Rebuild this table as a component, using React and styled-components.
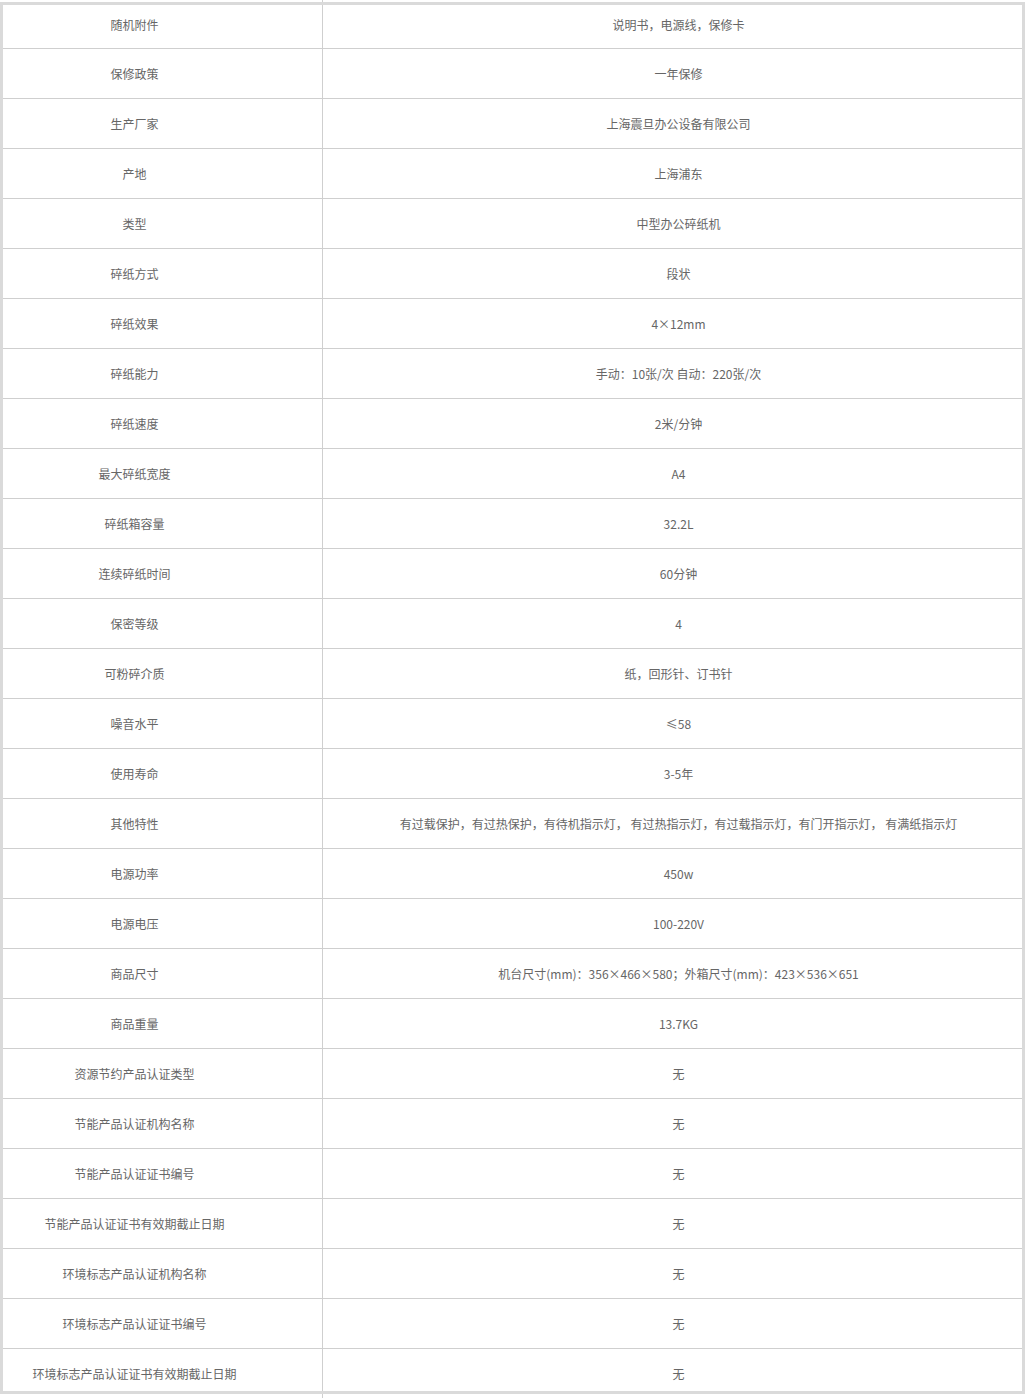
import React from "react";
import styled, { createGlobalStyle } from "styled-components";

const GlobalStyle = createGlobalStyle`
  html, body {
    margin: 0;
    padding: 0;
    background: #fff;
  }
  body {
    font-family: "Microsoft YaHei", "Noto Sans CJK SC", "Liberation Sans", sans-serif;
    font-size: 12px;
    color: #666;
  }
`;

const specs = [
  ["随机附件", "说明书，电源线，保修卡"],
  ["保修政策", "一年保修"],
  ["生产厂家", "上海震旦办公设备有限公司"],
  ["产地", "上海浦东"],
  ["类型", "中型办公碎纸机"],
  ["碎纸方式", "段状"],
  ["碎纸效果", "4×12mm"],
  ["碎纸能力", "手动：10张/次 自动：220张/次"],
  ["碎纸速度", "2米/分钟"],
  ["最大碎纸宽度", "A4"],
  ["碎纸箱容量", "32.2L"],
  ["连续碎纸时间", "60分钟"],
  ["保密等级", "4"],
  ["可粉碎介质", "纸，回形针、订书针"],
  ["噪音水平", "≤58"],
  ["使用寿命", "3-5年"],
  [
    "其他特性",
    "有过载保护，有过热保护，有待机指示灯， 有过热指示灯，有过载指示灯，有门开指示灯， 有满纸指示灯",
  ],
  ["电源功率", "450w"],
  ["电源电压", "100-220V"],
  ["商品尺寸", "机台尺寸(mm)：356×466×580；外箱尺寸(mm)：423×536×651"],
  ["商品重量", "13.7KG"],
  ["资源节约产品认证类型", "无"],
  ["节能产品认证机构名称", "无"],
  ["节能产品认证证书编号", "无"],
  ["节能产品认证证书有效期截止日期", "无"],
  ["环境标志产品认证机构名称", "无"],
  ["环境标志产品认证证书编号", "无"],
  ["环境标志产品认证证书有效期截止日期", "无"],
];

const Page = styled.div`
  width: 1025px;
`;

const Stub = styled.div`
  height: ${(p) => p.$h}px;
  width: 1px;
  margin-left: 322px;
  background: #cfcfcf;
`;

const Frame = styled.div`
  border: 3px solid #dadada;
  background: #fff;
`;

const Row = styled.div`
  display: grid;
  grid-template-columns: 320px 1fr;
  height: ${(p) => (p.$pos === "first" ? 43 : p.$pos === "last" ? 42 : 49)}px;
  border-bottom: ${(p) => (p.$pos === "last" ? "none" : "1px solid #cfcfcf")};
`;

const Cell = styled.div`
  display: flex;
  align-items: center;
  justify-content: center;
  text-align: center;
  line-height: 18px;
  white-space: nowrap;
  padding-top: ${(p) => (p.$pos === "last" ? 8 : p.$pos === "first" ? 0 : 1)}px;
  padding-bottom: ${(p) => (p.$pos === "first" ? 4 : 0)}px;
`;

const Label = styled(Cell)`
  border-right: 1px solid #cfcfcf;
  padding-right: 56px;
`;

const Value = styled(Cell)`
  padding-left: 12px;
`;

export default function App() {
  return (
    <Page>
      <GlobalStyle />
      <Stub $h={2} />
      <Frame>
        {specs.map(([k, v], i) => {
          const pos = i === 0 ? "first" : i === specs.length - 1 ? "last" : "mid";
          return (
            <Row key={k} $pos={pos}>
              <Label $pos={pos}>{k}</Label>
              <Value $pos={pos}>{v}</Value>
            </Row>
          );
        })}
      </Frame>
      <Stub $h={4} />
    </Page>
  );
}
